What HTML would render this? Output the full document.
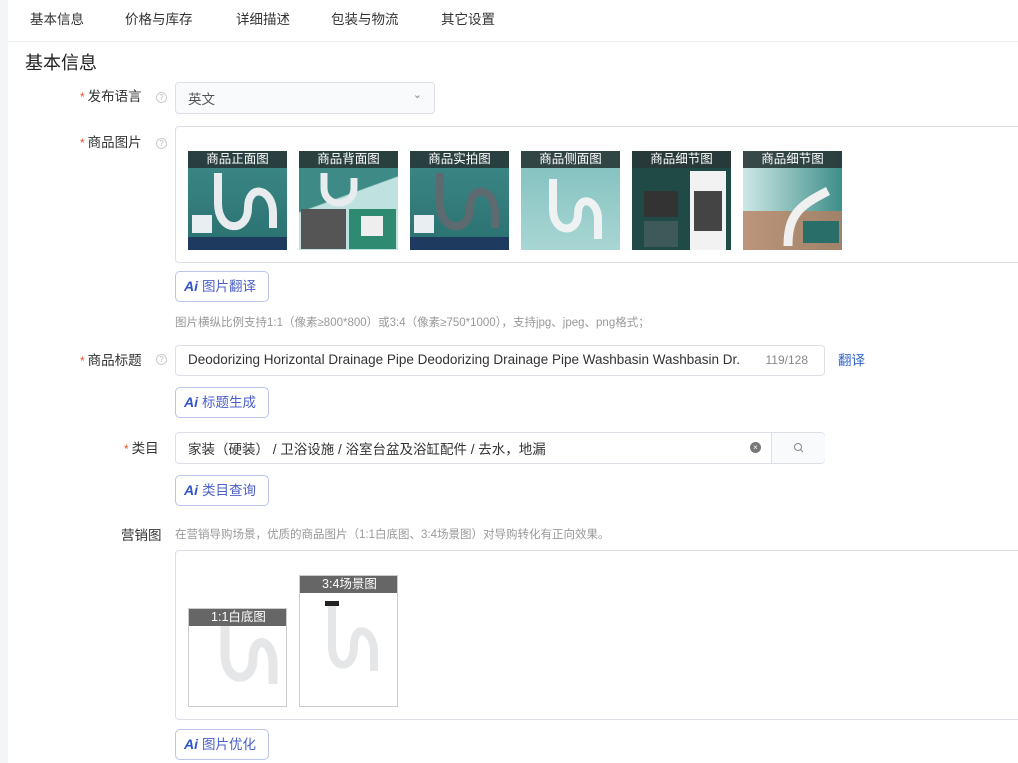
<!DOCTYPE html>
<html><head><meta charset="utf-8"><style>
*{box-sizing:border-box;margin:0;padding:0}
body{width:1018px;height:763px;overflow:hidden;background:#fff;font-family:"Liberation Sans","Noto Sans CJK SC",sans-serif;color:#333;position:relative}
.a{position:absolute;white-space:nowrap}
.strip{left:0;top:0;width:8px;height:763px;background:#f4f5f7}
.tab{top:8px;font-size:13.5px;color:#333}
.lbl{font-size:13.5px;color:#333}
.req{color:#e8542a;font-size:12px;margin-right:3px}
.q{width:11px;height:11px;border:1px solid #ccc;border-radius:50%;font-size:8px;color:#bbb;text-align:center;line-height:9px}
.box{border:1px solid #dcdfe6;border-radius:4px;background:#fff}
.ai{width:94px;height:31px;border:1px solid #b8c4ef;border-radius:5px;font-size:13.5px;color:#4a5fc9;padding-left:8px;line-height:29px}
.ai b{font-style:italic;font-weight:bold;color:#3355cc;margin-right:4px;font-size:14px}
.th{width:99px;height:99px;overflow:hidden}
.th .bar{position:absolute;left:0;top:0;width:99px;height:17px;background:rgba(40,55,55,.9);color:#fff;font-size:12.5px;text-align:center;line-height:17px}
.hint{font-size:11.5px;color:#999}
</style></head><body>
<div class="a strip"></div>
<div class="a" style="left:8px;top:41px;width:1010px;height:1px;background:#eceef0"></div>
<div class="a tab" style="left:30px">基本信息</div>
<div class="a tab" style="left:125px">价格与库存</div>
<div class="a tab" style="left:236px">详细描述</div>
<div class="a tab" style="left:331px">包装与物流</div>
<div class="a tab" style="left:441px">其它设置</div>
<div class="a" style="left:25px;top:49px;font-size:18px;color:#222">基本信息</div>

<div class="a lbl" style="left:80px;top:85px"><span class="req">*</span>发布语言</div>
<div class="a q" style="left:156px;top:92px">?</div>
<div class="a box" style="left:175px;top:82px;width:260px;height:32px;background:#f9fafb;font-size:13.5px;color:#555;padding:5px 12px">英文<span style="position:absolute;right:12px;top:5px;color:#888;font-size:11px">&#8964;</span></div>

<div class="a lbl" style="left:80px;top:131px"><span class="req">*</span>商品图片</div>
<div class="a q" style="left:156px;top:138px">?</div>
<div class="a box" style="left:175px;top:126px;width:850px;height:137px;border-radius:4px 0 0 4px"></div>

<div class="a th" style="left:188px;top:151px;background:linear-gradient(#3d8a88,#2a7070)"><svg width="99" height="99"><path d="M30 22v30c0 30 30 30 30 5s25-20 25 5v15" stroke="#e8ecee" stroke-width="8" fill="none"/><rect x="0" y="86" width="99" height="13" fill="#1e3a5e"/><rect x="4" y="64" width="20" height="18" fill="#e8eef2"/></svg><div class="bar">商品正面图</div></div>
<div class="a th" style="left:299px;top:151px;background:linear-gradient(160deg,#3e8a86 45%,#bfe1e0 46%)"><svg width="99" height="99"><path d="M25 22v15c0 20 30 20 30 0v-10" stroke="#e8ecee" stroke-width="7" fill="none"/><rect x="2" y="58" width="45" height="40" fill="#555"/><rect x="50" y="58" width="47" height="40" fill="#2e8a70"/><rect x="62" y="65" width="22" height="20" fill="#eee"/></svg><div class="bar">商品背面图</div></div>
<div class="a th" style="left:410px;top:151px;background:linear-gradient(#3d8a88,#2a7070)"><svg width="99" height="99"><path d="M30 22v30c0 30 30 30 30 5s25-20 25 5v15" stroke="#5d6a70" stroke-width="8" fill="none"/><rect x="0" y="86" width="99" height="13" fill="#1e3a5e"/><rect x="4" y="64" width="20" height="18" fill="#e8eef2"/></svg><div class="bar">商品实拍图</div></div>
<div class="a th" style="left:521px;top:151px;background:linear-gradient(#7fbfbd,#a8d6d4)"><svg width="99" height="99"><path d="M32 28v30c0 25 25 25 25 5s20-15 20 5v20" stroke="#eef2f3" stroke-width="8" fill="none"/></svg><div class="bar">商品侧面图</div></div>
<div class="a th" style="left:632px;top:151px;background:#1f4a46"><svg width="99" height="99"><rect x="58" y="20" width="36" height="79" fill="#f2f2f2"/><rect x="62" y="40" width="28" height="40" fill="#444"/><rect x="12" y="40" width="34" height="26" fill="#333"/><rect x="12" y="70" width="34" height="26" fill="#3d5a58"/></svg><div class="bar">商品细节图</div></div>
<div class="a th" style="left:743px;top:151px;background:linear-gradient(90deg,#cde8e5,#3e8e8a)"><svg width="99" height="99"><rect x="0" y="60" width="99" height="39" fill="#b88060" opacity=".8"/><path d="M45 95c0-30 10-40 40-55" stroke="#f0f0f0" stroke-width="9" fill="none"/><rect x="60" y="70" width="36" height="22" fill="#2a6e6a"/></svg><div class="bar">商品细节图</div></div>

<div class="a ai" style="left:175px;top:271px"><b>Ai</b>图片翻译</div>
<div class="a hint" style="left:175px;top:314px">图片横纵比例支持1:1（像素≥800*800）或3:4（像素≥750*1000），支持jpg、jpeg、png格式；</div>

<div class="a lbl" style="left:80px;top:349px"><span class="req">*</span>商品标题</div>
<div class="a q" style="left:156px;top:354px">?</div>
<div class="a box" style="left:175px;top:345px;width:650px;height:31px;font-size:13.5px;color:#333;padding:6px 12px;overflow:hidden">Deodorizing Horizontal Drainage Pipe Deodorizing Drainage Pipe Washbasin Washbasin Dr.<span style="position:absolute;right:16px;top:7px;font-size:12px;color:#888">119/128</span></div>
<div class="a" style="left:838px;top:349px;font-size:13.5px;color:#3366cc">翻译</div>
<div class="a ai" style="left:175px;top:387px"><b>Ai</b>标题生成</div>

<div class="a lbl" style="left:124px;top:437px"><span class="req">*</span>类目</div>
<div class="a box" style="left:175px;top:432px;width:650px;height:32px;font-size:13.5px;padding:5px 12px">家装（硬装） / 卫浴设施 / 浴室台盆及浴缸配件 / 去水，地漏
<span style="position:absolute;left:574px;top:9px;width:11px;height:11px;border-radius:50%;background:#777;color:#fff;font-size:8px;line-height:11px;text-align:center">×</span>
<span style="position:absolute;left:595px;top:0;width:54px;height:30px;border-left:1px solid #dcdfe6;background:#f9fafb;border-radius:0 4px 4px 0"><svg width="54" height="30"><circle cx="26" cy="14" r="3.5" stroke="#888" fill="none"/><path d="M28.5 16.5l2.5 2.5" stroke="#888"/></svg></span></div>
<div class="a ai" style="left:175px;top:475px"><b>Ai</b>类目查询</div>

<div class="a lbl" style="left:121px;top:524px">营销图</div>
<div class="a hint" style="left:175px;top:526px">在营销导购场景，优质的商品图片（1:1白底图、3:4场景图）对导购转化有正向效果。</div>
<div class="a box" style="left:175px;top:550px;width:850px;height:170px;border-radius:4px 0 0 4px"></div>
<div class="a" style="left:188px;top:608px;width:99px;height:99px;border:1px solid #ccc;background:#fff;overflow:hidden"><svg width="99" height="99"><path d="M36 15v30c0 30 28 30 28 5s20-20 20 5v20" stroke="#e4e6e8" stroke-width="9" fill="none"/></svg><div style="position:absolute;left:0;top:0;width:99px;height:17px;background:#666;color:#fff;font-size:12.5px;text-align:center;line-height:17px">1:1白底图</div></div>
<div class="a" style="left:299px;top:575px;width:99px;height:132px;border:1px solid #ccc;background:#fff;overflow:hidden"><svg width="99" height="132"><rect x="25" y="25" width="14" height="5" fill="#222"/><path d="M32 30v40c0 25 22 25 22 0s20-15 20 5v20" stroke="#e4e6e8" stroke-width="8" fill="none"/></svg><div style="position:absolute;left:0;top:0;width:99px;height:17px;background:#666;color:#fff;font-size:12.5px;text-align:center;line-height:17px">3:4场景图</div></div>
<div class="a ai" style="left:175px;top:729px"><b>Ai</b>图片优化</div>
</body></html>
